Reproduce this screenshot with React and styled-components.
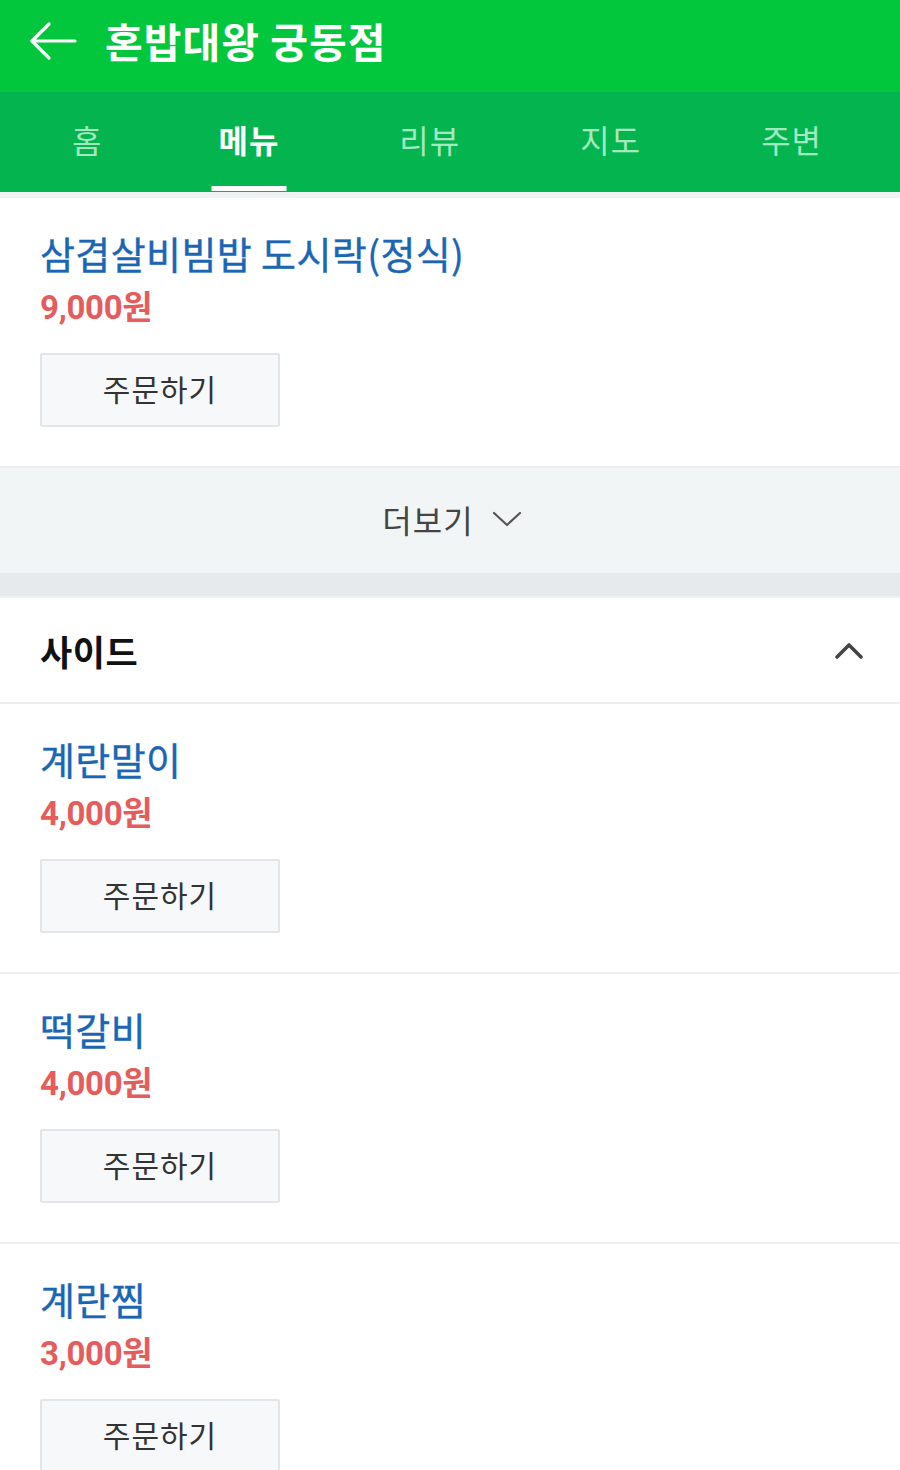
import React from "react";
import styled, { createGlobalStyle } from "styled-components";

const Global = createGlobalStyle`
  html, body { margin: 0; padding: 0; background: #ffffff; }
  body { font-family: "Noto Sans CJK KR", "Noto Sans", sans-serif; -webkit-font-smoothing: antialiased; }
  * { box-sizing: border-box; }
`;

const Page = styled.div`
  width: 900px;
  height: 1470px;
  overflow: hidden;
  background: #fff;
`;

const Header = styled.header`
  height: 92px;
  background: #02c73c;
  display: flex;
  align-items: center;
  padding: 0 0 10px 29px;
  gap: 28px;
`;

const BackBtn = styled.div`
  width: 48px;
  height: 40px;
  display: flex;
  align-items: center;
  justify-content: center;
`;

const Title = styled.h1`
  margin: 0;
  color: #fff;
  font-size: 41px;
  font-weight: 700;
  letter-spacing: 1px;
  line-height: 1;
  padding-bottom: 2px;
`;

const TabBar = styled.nav`
  height: 100px;
  background: #03b44f;
  display: flex;
  padding-left: 12px;
`;

const Tab = styled.div`
  position: relative;
  padding: 0 60px 6px;
  display: flex;
  align-items: center;
  justify-content: center;
  font-size: 32px;
  letter-spacing: 1px;
  font-weight: ${(p) => (p.$active ? 700 : 400)};
  color: ${(p) => (p.$active ? "#ffffff" : "rgba(225, 255, 235, 0.72)")};

  &:first-child {
    padding-right: 56px;
  }
`;

const Underline = styled.span`
  position: absolute;
  bottom: 1px;
  left: 50%;
  transform: translateX(-50%);
  width: 75px;
  height: 5px;
  background: #ffffff;
`;

const Strip = styled.div`
  height: ${(p) => p.$h}px;
  background: ${(p) => p.$bg};
  border-bottom: ${(p) => (p.$line ? `2px solid ${p.$line}` : "none")};
`;

const Item = styled.div`
  padding: 30px 40px 39px;
  border-bottom: 2px solid #eceef0;
`;

const ItemName = styled.div`
  font-size: 38px;
  line-height: 50px;
  font-weight: 400;
  color: #1a66b4;
  letter-spacing: 0.4px;
  -webkit-text-stroke: 0.4px #1a66b4;
`;

const Price = styled.div`
  margin-top: 6px;
  font-family: "Roboto", "Noto Sans CJK KR", sans-serif;
  font-size: 33px;
  line-height: 48px;
  font-weight: 700;
  color: #e65b5b;
  letter-spacing: -0.3px;
`;

const OrderBtn = styled.button`
  margin-top: 21px;
  width: 240px;
  height: 74px;
  background: #f7f8fa;
  border: 2px solid #e3e5e8;
  border-radius: 2px;
  font-family: "Noto Sans CJK KR", sans-serif;
  font-size: 30px;
  color: #333;
  display: flex;
  align-items: center;
  justify-content: center;
  padding: 0 0 4px;
  letter-spacing: 1px;
`;

const MoreBar = styled.div`
  height: 105px;
  background: #f2f5f6;
  display: flex;
  align-items: center;
  justify-content: center;
  gap: 18px;
  font-size: 32px;
  color: #444;
  padding: 0 0 4px 4px;
  letter-spacing: 1px;
`;

const SectionHeader = styled.div`
  height: 106px;
  display: flex;
  align-items: center;
  justify-content: space-between;
  padding: 0 36px 0 40px;
  border-bottom: 2px solid #eceef0;
`;

const SectionTitle = styled.div`
  font-size: 35px;
  font-weight: 700;
  color: #111;
  letter-spacing: 0.5px;
`;

const items = [
  { name: "계란말이", price: "4,000원" },
  { name: "떡갈비", price: "4,000원" },
  { name: "계란찜", price: "3,000원" },
];

function MenuItem({ name, price }) {
  return (
    <Item>
      <ItemName>{name}</ItemName>
      <Price>{price}</Price>
      <OrderBtn>주문하기</OrderBtn>
    </Item>
  );
}

export default function App() {
  const tabs = ["홈", "메뉴", "리뷰", "지도", "주변"];
  return (
    <Page>
      <Global />
      <Header>
        <BackBtn>
          <svg width="48" height="40" viewBox="0 0 48 40" fill="none" stroke="#fff" strokeWidth="3.2" strokeLinecap="round" strokeLinejoin="round">
            <path d="M3 20 H46" />
            <path d="M20 3 L3 20 L20 37" />
          </svg>
        </BackBtn>
        <Title>혼밥대왕 궁동점</Title>
      </Header>
      <TabBar>
        {tabs.map((t) => (
          <Tab key={t} $active={t === "메뉴"}>
            {t}
            {t === "메뉴" && <Underline />}
          </Tab>
        ))}
      </TabBar>
      <Strip $h={6} $bg="#eff3f4" />
      <Item>
        <ItemName>삼겹살비빔밥 도시락(정식)</ItemName>
        <Price>9,000원</Price>
        <OrderBtn>주문하기</OrderBtn>
      </Item>
      <MoreBar>
        <span>더보기</span>
        <svg width="30" height="18" viewBox="0 0 30 18" fill="none" stroke="#555" strokeWidth="2.2" strokeLinecap="round" strokeLinejoin="round">
          <path d="M2 3 L15 15 L28 3" />
        </svg>
      </MoreBar>
      <Strip $h={25} $bg="#e6eaed" $line="#eef1f3" />
      <SectionHeader>
        <SectionTitle>사이드</SectionTitle>
        <svg width="30" height="20" viewBox="0 0 30 20" fill="none" stroke="#444" strokeWidth="3.6" strokeLinecap="round" strokeLinejoin="round">
          <path d="M3 17 L15 5 L27 17" />
        </svg>
      </SectionHeader>
      {items.map((it) => (
        <MenuItem key={it.name} {...it} />
      ))}
    </Page>
  );
}
